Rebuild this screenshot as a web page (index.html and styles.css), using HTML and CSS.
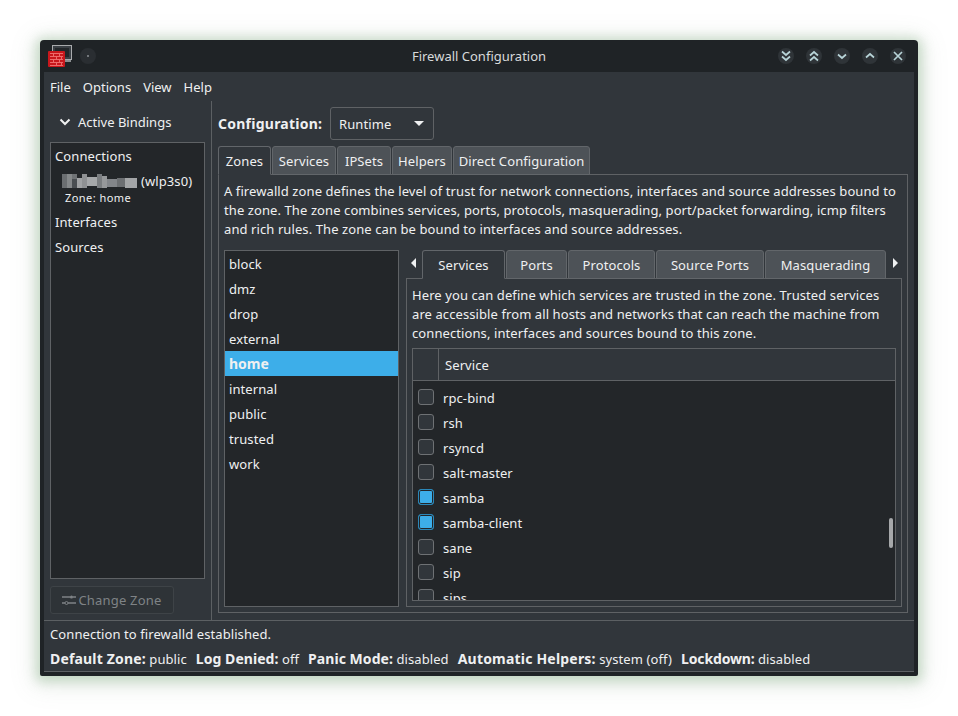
FILE: index.html
```html
<!DOCTYPE html>
<html lang="en">
<head>
<meta charset="utf-8">
<title>Firewall Configuration</title>
<link rel="stylesheet" href="styles.css">
</head>
<body>
<div class="window">
  <header class="titlebar">
    <div class="tb-left">
      <svg class="appicon" width="26" height="24" viewBox="0 0 26 24">
        <rect x="4.500" y="0.500" width="19" height="14" fill="#3a3f44" stroke="#a9abad"/>
        <rect x="7" y="3" width="14" height="9" fill="#23272a"/>
        <rect x="9" y="15" width="14" height="2" fill="#8b8e90"/>
        <rect x="0" y="6" width="17" height="16" rx="1" fill="#c9171c"/>
        <path d="M2 8.500h13M2 11.500h13M2 14.500h13M2 17.500h13M2 20.500h13M5.500 9v2M11.500 9v2M8.500 12v2M13.500 12v2M5.500 15v2M11.500 15v2M8.500 18v2M13.500 18v2" stroke="#ee6a6a" stroke-width="1" fill="none"/>
      </svg>
      <span class="wbtn pin"><i class="dot"></i></span>
    </div>
    <div class="tb-title">Firewall Configuration</div>
    <div class="tb-right">
      <span class="wbtn"><svg width="12" height="12" viewBox="0 0 12 12"><path d="M2 1.500l4 3.500 4-3.500M2 6.500l4 3.500 4-3.500"/></svg></span>
      <span class="wbtn"><svg width="12" height="12" viewBox="0 0 12 12"><path d="M2 5.500l4-3.500 4 3.500M2 10.500l4-3.500 4 3.500"/></svg></span>
      <span class="wbtn"><svg width="12" height="12" viewBox="0 0 12 12"><path d="M2 4.500l4 3.500 4-3.500"/></svg></span>
      <span class="wbtn"><svg width="12" height="12" viewBox="0 0 12 12"><path d="M2 7.500l4-3.500 4 3.500"/></svg></span>
      <span class="wbtn"><svg width="12" height="12" viewBox="0 0 12 12"><path d="M2 2l8 8M10 2l-8 8"/></svg></span>
    </div>
  </header>
  <div class="client">
    <nav class="menubar"><span>File</span><span>Options</span><span>View</span><span>Help</span></nav>
    <div class="main">
      <aside class="sidebar">
        <div class="bindings-head">
          <svg width="12" height="8" viewBox="0 0 12 8"><path d="M1.500 1.500L6 6l4.500-4.500" fill="none" stroke="#eff0f1" stroke-width="2"/></svg>
          <span>Active Bindings</span>
        </div>
        <div class="bindings">
          <div class="b-row">Connections</div>
          <div class="b-conn">
            <div class="b-line">
              <svg class="redact" width="75" height="14" viewBox="0 0 75 14">
                <rect x="0" y="0" width="5" height="14" fill="#6b6e71"/><rect x="5" y="0" width="5" height="14" fill="#85888a"/><rect x="10" y="0" width="5" height="5" fill="#6f7275"/><rect x="10" y="5" width="5" height="9" fill="#4a4e52"/><rect x="15" y="4" width="5" height="10" fill="#a0a2a4"/><rect x="20" y="0" width="5" height="14" fill="#8f9193"/><rect x="25" y="3" width="10" height="9" fill="#a6a8aa"/><rect x="35" y="0" width="5" height="14" fill="#7a7d80"/><rect x="40" y="2" width="5" height="12" fill="#96989a"/><rect x="45" y="5" width="10" height="8" fill="#83868a"/><rect x="55" y="4" width="8" height="9" fill="#6c6f72"/><rect x="63" y="4" width="12" height="10" fill="#a3a5a7"/>
              </svg>
              <span>(wlp3s0)</span>
            </div>
            <div class="b-zone">Zone: home</div>
          </div>
          <div class="b-row">Interfaces</div>
          <div class="b-row">Sources</div>
        </div>
        <button class="change-zone" type="button">
          <svg width="14" height="12" viewBox="0 0 14 12"><path d="M0 3h8M11 3h3M0 9h3M6 9h8" stroke="#7f8386" stroke-width="1.300" fill="none"/><circle cx="9.500" cy="3" r="1.600" fill="#7f8386"/><circle cx="4.500" cy="9" r="1.500" fill="none" stroke="#7f8386"/></svg>
          <span>Change Zone</span>
        </button>
      </aside>
      <section class="content">
        <div class="config-row">
          <strong class="config-label">Configuration:</strong>
          <div class="combo"><span>Runtime</span><i class="caret"></i></div>
        </div>
        <div class="tabs">
          <span class="tab active t-zones">Zones</span>
          <span class="tab t-services">Services</span>
          <span class="tab t-ipsets">IPSets</span>
          <span class="tab t-helpers">Helpers</span>
          <span class="tab t-direct">Direct Configuration</span>
        </div>
        <div class="pane">
          <p class="desc">A firewalld zone defines the level of trust for network connections, interfaces and source addresses bound to the zone. The zone combines services, ports, protocols, masquerading, port/packet forwarding, icmp filters and rich rules. The zone can be bound to interfaces and source addresses.</p>
          <div class="zone-split">
            <ul class="zones">
              <li>block</li><li>dmz</li><li>drop</li><li>external</li><li class="sel">home</li><li>internal</li><li>public</li><li>trusted</li><li>work</li>
            </ul>
            <div class="zone-detail">
              <div class="subtabs">
                <i class="arrow left"></i>
                <span class="tab active st-services">Services</span>
                <span class="tab st-ports">Ports</span>
                <span class="tab st-protocols">Protocols</span>
                <span class="tab st-source">Source Ports</span>
                <span class="tab st-masq">Masquerading</span>
                <i class="arrow right"></i>
              </div>
              <div class="subpane">
                <p class="subdesc">Here you can define which services are trusted in the zone. Trusted services are accessible from all hosts and networks that can reach the machine from connections, interfaces and sources bound to this zone.</p>
                <div class="tree">
                  <div class="tree-head"><span class="th-check"></span><span class="th-name">Service</span></div>
                  <div class="tree-body">
                    <div class="svc"><i class="check"></i><span>rpc-bind</span></div>
                    <div class="svc"><i class="check"></i><span>rsh</span></div>
                    <div class="svc"><i class="check"></i><span>rsyncd</span></div>
                    <div class="svc"><i class="check"></i><span>salt-master</span></div>
                    <div class="svc"><i class="check on"></i><span>samba</span></div>
                    <div class="svc"><i class="check on"></i><span>samba-client</span></div>
                    <div class="svc"><i class="check"></i><span>sane</span></div>
                    <div class="svc"><i class="check"></i><span>sip</span></div>
                    <div class="svc"><i class="check"></i><span>sips</span></div>
                    <i class="scroll-thumb"></i>
                  </div>
                </div>
              </div>
            </div>
          </div>
        </div>
      </section>
    </div>
    <footer class="status">
      <div class="status-msg">Connection to firewalld established.</div>
      <div class="status-items">
        <span class="si-default"><b>Default Zone:</b> public</span>
        <span class="si-log"><b>Log Denied:</b> off</span>
        <span class="si-panic"><b>Panic Mode:</b> disabled</span>
        <span class="si-auto"><b>Automatic Helpers:</b> system (off)</span>
        <span class="si-lock"><b>Lockdown:</b> disabled</span>
      </div>
    </footer>
  </div>
</div>
</body>
</html>
```
FILE: styles.css
```css
* { box-sizing: border-box; }
html, body { margin: 0; padding: 0; background: #fff; }
body {
  width: 958px;
  height: 716px;
  overflow: hidden;
  padding: 40px 0 0 40px;
  font: 13px/19px "Noto Sans", sans-serif;
  letter-spacing: .09px;
  color: #eff0f1;
}
.window {
  width: 878px;
  height: 636px;
  background: #1f2326;
  border-radius: 4px 4px 2px 2px;
  box-shadow: 0 2px 12px 4px rgba(120, 170, 120, .38), 0 4px 24px 8px rgba(120, 140, 120, .12);
  padding: 0 4px 4px;
  display: flex;
  flex-direction: column;
}
.titlebar {
  height: 32px;
  flex: none;
  display: flex;
  align-items: center;
  justify-content: space-between;
  position: relative;
}
.tb-left { display: flex; align-items: center; gap: 6px; padding-left: 4px; }
.appicon { margin-top: 2px; }
.tb-title {
  position: absolute;
  left: 0;
  right: 0;
  text-align: center;
  color: #d8dadb;
  letter-spacing: 0;
  pointer-events: none;
}
.tb-right { display: flex; gap: 12px; padding-right: 8px; }
.wbtn {
  width: 16px;
  height: 16px;
  border-radius: 50%;
  background: #2f3438;
  display: flex;
  align-items: center;
  justify-content: center;
  position: relative;
}
.tb-right svg path { fill: none; stroke: #b8d4d8; stroke-width: 1.700; }
.pin { background: #2a2e32; }
.dot { width: 2px; height: 2px; background: #8d9194; border-radius: 50%; }
.client {
  flex: 1;
  min-height: 0;
  background: #31363b;
  display: flex;
  flex-direction: column;
}
.menubar {
  height: 29px;
  flex: none;
  display: flex;
  align-items: center;
  gap: 12px;
  padding: 1px 0 0 6px;
  letter-spacing: 0;
}
.main { flex: 1; min-height: 0; display: flex; }
.sidebar {
  width: 168px;
  flex: none;
  border-right: 1px solid #5c6063;
  padding: 0 6px 6px;
  display: flex;
  flex-direction: column;
}
.bindings-head {
  height: 41px;
  flex: none;
  display: flex;
  align-items: center;
  gap: 7px;
  padding: 1px 0 0 9px;
  letter-spacing: 0;
}
.bindings {
  flex: 1;
  min-height: 0;
  background: #232629;
  border: 1px solid #5f6265;
  padding: 1px 4px;
}
.b-row { height: 25px; display: flex; align-items: center; }
.b-conn { height: 41px; padding-left: 7px; padding-top: 3px; }
.b-line { display: flex; align-items: center; gap: 4px; height: 18px; }
.b-zone { font-size: 11px; line-height: 15px; padding-left: 3px; letter-spacing: .45px; }
.change-zone {
  width: 124px;
  height: 28px;
  flex: none;
  margin-top: 7px;
  background: #2e3337;
  border: 1px solid #3e4347;
  border-radius: 3px;
  color: #7f8386;
  font: inherit;
  letter-spacing: .2px;
  display: flex;
  align-items: center;
  justify-content: center;
  gap: 2px;
  padding: 0;
}
.content { flex: 1; min-width: 0; padding: 6px 6px 7px; display: flex; flex-direction: column; }
.config-row { display: flex; align-items: center; gap: 8px; height: 33px; flex: none; }
.config-label { font-weight: 700; font-size: 14px; letter-spacing: .25px; width: 104px; white-space: nowrap; }
.combo {
  width: 104px;
  height: 33px;
  border: 1px solid #5f6265;
  border-radius: 3px;
  display: flex;
  align-items: center;
  justify-content: space-between;
  padding: 1px 9px 0 8px;
}
.caret { border: 5px solid transparent; border-top: 5px solid #eff0f1; border-bottom: 0; width: 0; height: 0; margin-top: -1px; }
.tabs { display: flex; gap: 1px; margin-top: 6px; height: 29px; flex: none; position: relative; z-index: 1; }
.tab {
  height: 29px;
  flex: none;
  background: #4d5257;
  border: 1px solid #62666a;
  border-radius: 3px 3px 0 0;
  display: flex;
  align-items: center;
  justify-content: center;
  white-space: nowrap;
  padding-top: 1px;
}
.tab.active { background: #31363b; border-bottom-color: #31363b; }
.t-zones { width: 53px; }
.t-services { width: 64px; }
.t-ipsets { width: 54px; }
.t-helpers { width: 60px; }
.t-direct { width: 137px; }
.pane {
  flex: 1;
  min-height: 0;
  margin-top: -1px;
  border: 1px solid #5f6265;
  padding: 7px 5px 5px;
  display: flex;
  flex-direction: column;
}
.desc { margin: 0; height: 57px; flex: none; }
.zone-split { flex: 1; min-height: 0; display: flex; gap: 7px; margin-top: 11px; }
.zones {
  list-style: none;
  margin: 0;
  padding: 0;
  width: 175px;
  flex: none;
  background: #232629;
  border: 1px solid #5f6265;
}
.zones li { height: 25px; line-height: 27px; padding-left: 4px; }
.zones .sel { background: #3daee9; font-weight: 700; font-size: 14px; letter-spacing: 0; line-height: 25px; }
.zone-detail { flex: 1; min-width: 0; display: flex; flex-direction: column; }
.subtabs { display: flex; height: 29px; flex: none; align-items: flex-start; position: relative; z-index: 1; }
.subtabs .tab { margin-right: 1px; padding-top: 2px; }
.arrow { width: 16px; height: 24px; flex: none; position: relative; }
.arrow::after {
  content: "";
  position: absolute;
  top: 8px;
  left: 5px;
  border: 5px solid transparent;
  border-left-width: 0;
  border-right-color: #eff0f1;
}
.arrow.right::after { border-right-width: 0; border-left: 5px solid #eff0f1; left: 6px; }
.st-services { width: 83px; }
.st-ports { width: 61px; }
.st-protocols { width: 87px; }
.st-source { width: 108px; }
.st-masq { width: 121px; }
.subpane {
  flex: 1;
  min-height: 0;
  margin-top: -1px;
  border: 1px solid #5f6265;
  padding: 7px 5px 5px;
  display: flex;
  flex-direction: column;
}
.subdesc { margin: 0; height: 57px; flex: none; }
.tree {
  flex: 1;
  min-height: 0;
  margin-top: 5px;
  border: 1px solid #5f6265;
  display: flex;
  flex-direction: column;
}
.tree-head { height: 32px; flex: none; display: flex; border-bottom: 1px solid #5f6265; }
.th-check { width: 26px; border-right: 1px solid #5f6265; }
.th-name { padding-left: 6px; line-height: 32px; }
.tree-body { flex: 1; min-height: 0; overflow: hidden; background: #232629; padding-top: 5px; position: relative; }
.svc { height: 25px; display: flex; align-items: center; gap: 9px; padding-left: 5px; }
.check {
  width: 16px;
  height: 16px;
  flex: none;
  border: 1px solid #6e7174;
  border-radius: 3px;
  background: #31363b;
  margin-top: -4px;
}
.check.on { border-color: #2b87b8; background: #3daee9; box-shadow: inset 0 0 0 1px #232629; }
.scroll-thumb {
  position: absolute;
  right: 2px;
  top: 137px;
  width: 4px;
  height: 30px;
  border-radius: 2px;
  background: #a6a8aa;
}
.status { flex: none; height: 52px; border-top: 1px solid #5c6063; border-bottom: 1px solid #5c6063; padding: 4px 6px 0; }
.status-msg { height: 24px; }
.status-items { display: flex; gap: 9px; white-space: nowrap; }
.status-items b { font-size: 14px; }
.si-default b { letter-spacing: .17px; }
.si-log b { letter-spacing: .05px; }
.si-panic b { letter-spacing: .05px; }
.si-auto b { letter-spacing: .2px; }
.si-lock b { letter-spacing: -.15px; }
```
